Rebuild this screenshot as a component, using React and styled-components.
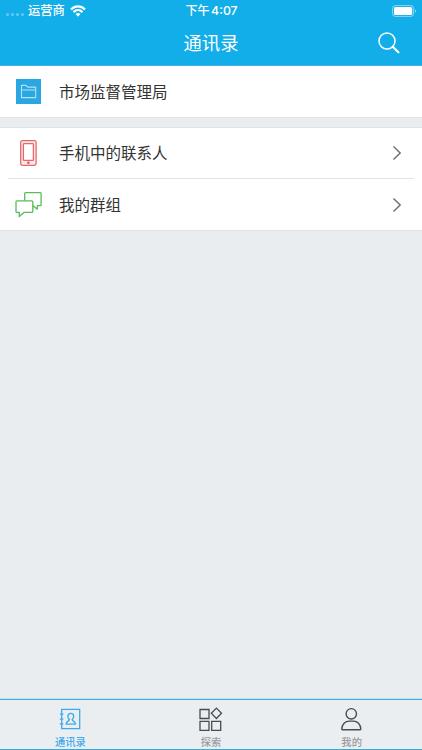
import { useState } from "react";
import styled, { createGlobalStyle } from "styled-components";

const tabs = [
  { key: "contacts", label: "通讯录", Icon: ContactsIcon },
  { key: "explore", label: "探索", Icon: ExploreIcon },
  { key: "me", label: "我的", Icon: PersonIcon },
];

export default function App() {
  const [active, setActive] = useState("contacts");

  return (
    <>
      <GlobalStyle />
      <Screen>
        <Header>
          <StatusBar>
            <Carrier>
              <SignalDots>
                <span />
                <span />
                <span />
                <span />
              </SignalDots>
              <CarrierName>运营商</CarrierName>
              <WifiIcon />
            </Carrier>
            <Clock>
              下午 <ClockTime>4:07</ClockTime>
            </Clock>
            <BatteryIcon />
          </StatusBar>
          <NavBar>
            <Title>通讯录</Title>
            <SearchButton aria-label="搜索">
              <SearchIcon />
            </SearchButton>
          </NavBar>
        </Header>

        <Content>
          <Group>
            <Row $height={51}>
              <RowIcon>
                <FolderIcon />
              </RowIcon>
              <RowLabel>市场监督管理局</RowLabel>
            </Row>
          </Group>
          <Group>
            <Row $height={50}>
              <RowIcon>
                <PhoneIcon />
              </RowIcon>
              <RowLabel>手机中的联系人</RowLabel>
              <Chevron />
            </Row>
            <Divider />
            <Row $height={51}>
              <RowIcon>
                <ChatIcon />
              </RowIcon>
              <RowLabel>我的群组</RowLabel>
              <Chevron />
            </Row>
          </Group>
        </Content>

        <TabBar>
          {tabs.map(({ key, label, Icon }) => (
            <Tab key={key} $active={active === key} onClick={() => setActive(key)}>
              <Icon />
              <TabLabel $active={active === key}>{label}</TabLabel>
            </Tab>
          ))}
        </TabBar>
      </Screen>
    </>
  );
}

// Icons
function WifiIcon() {
  return (
    <svg width="16" height="12" viewBox="0 0 16 12" fill="none" stroke="#fff" strokeWidth="2.2">
      <path d="M1 4.4C5 .3 11 .3 15 4.4" />
      <path d="M3.5 7.1c2.6-2.6 6.4-2.6 9 0" />
      <path d="M8 11.7 5.5 9.1c1.4-1.4 3.6-1.4 5 0z" fill="#fff" stroke="none" />
    </svg>
  );
}

function BatteryIcon() {
  return (
    <svg width="25" height="12" viewBox="0 0 25 12" fill="none">
      <rect x=".6" y=".6" width="21" height="10.8" rx="2.8" stroke="#fff" strokeOpacity=".5" />
      <rect x="2" y="2" width="18.2" height="8" rx="1.5" fill="#fff" />
      <path d="M23 4.2c1.4.6 1.4 3 0 3.6z" fill="#fff" fillOpacity=".55" />
    </svg>
  );
}

function SearchIcon() {
  return (
    <svg width="22" height="22" viewBox="0 0 22 22" fill="none" stroke="#fff">
      <circle cx="9" cy="9" r="8" strokeWidth="1.5" />
      <path d="m14.7 14.7 5.7 5.6" strokeWidth="2.2" strokeLinecap="round" />
    </svg>
  );
}

function FolderIcon() {
  return (
    <svg width="25" height="25" viewBox="0 0 25 25" fill="none">
      <rect width="25" height="25" fill="#29a7e1" />
      <path
        d="M5.5 18.6V6.4h4.4l1.8 1.7h8v10.5zM5.5 11h14.2"
        stroke="#b5e1f6"
        strokeWidth="1.1"
        strokeLinejoin="round"
      />
    </svg>
  );
}

function PhoneIcon() {
  return (
    <svg width="17" height="26" viewBox="0 0 17 26" fill="none" stroke="#e8676a">
      <rect x=".7" y=".7" width="15.4" height="24.6" rx="1.8" strokeWidth="1.3" fill="#fdeaea" />
      <rect x="3.4" y="3.6" width="10" height="16.8" rx=".6" strokeWidth="1.3" fill="#fff" />
      <circle cx="8.4" cy="22.8" r="1.2" fill="#e0484c" stroke="none" />
    </svg>
  );
}

function ChatIcon() {
  return (
    <svg
      width="27"
      height="26"
      viewBox="0 0 27 26"
      fill="none"
      stroke="#56bd58"
      strokeWidth="1.3"
      strokeLinejoin="round"
    >
      <path d="M9.7 8.6V1.6c0-.6.3-.9.9-.9h14.6c.6 0 .9.3.9.9v11.1c0 .6-.3.9-.9.9h-2.9v3.6l-4.5-3.8" />
      <path d="M1.9 8.8h15c.6 0 .9.3.9.9v9.7c0 .6-.3.9-.9.9H9.3l-5 4.2v-4.2H1.9c-.6 0-.9-.3-.9-.9V9.7c0-.6.3-.9.9-.9z" />
    </svg>
  );
}

function Chevron() {
  return (
    <svg width="10" height="16" viewBox="0 0 10 16" fill="none" stroke="#6c6c6c" strokeWidth="1.4">
      <path d="m1.5 1.6 6.7 6.4-6.7 6.4" />
    </svg>
  );
}

function ContactsIcon() {
  return (
    <svg width="22" height="24" viewBox="0 0 22 24" fill="none" stroke="currentColor" strokeWidth="1.3">
      <path d="M2.7 2.4h18v19.2h-18zM.8 7.2h3.6M.8 12.1h3.6M.8 16.8h3.6" />
      <path
        strokeWidth="1.4"
        d="M11.8 6.4c-3.7 0-3.5 4.6-1.4 6.2-.2 1.8-3.2 1.3-3.2 4.5h9.2c0-3.2-3-2.7-3.2-4.5 2.1-1.6 2.3-6.2-1.4-6.2z"
      />
    </svg>
  );
}

function ExploreIcon() {
  return (
    <svg width="24" height="24" viewBox="0 0 24 24" fill="none" stroke="currentColor" strokeWidth="1.3">
      <path d="M1 2.5h9v9H1zM1 14.3h9v9H1zM12.7 14.3h9v9h-9z" />
      <path d="m17.4 1.1 5.1 5.2-5.1 5.2-5.1-5.2z" />
    </svg>
  );
}

function PersonIcon() {
  return (
    <svg width="22" height="24" viewBox="0 0 22 24" fill="none" stroke="currentColor" strokeWidth="1.4">
      <circle cx="10.3" cy="6.8" r="5.2" />
      <path d="M1.4 22.7c-.4 0-.6-.2-.6-.6.2-4.9 3.4-8 7.4-8h4.2c4 0 7.2 3.1 7.4 8 0 .4-.2.6-.6.6z" />
    </svg>
  );
}

// Styled Components
const GlobalStyle = createGlobalStyle`
  * {
    box-sizing: border-box;
  }

  body {
    margin: 0;
    font-family: "Noto Sans CJK SC", sans-serif;
  }

  button {
    padding: 0;
    border: none;
    background: none;
    font: inherit;
    cursor: pointer;
  }

  svg {
    display: block;
    flex-shrink: 0;
  }
`;

const Screen = styled.div`
  height: 100vh;
  display: flex;
  flex-direction: column;
  background: #eaedf0;
  overflow: hidden;
`;

const Header = styled.header`
  height: 66px;
  background: #12aee9;
  border-bottom: 1px solid #3db5e3;
  color: #fff;
`;

const StatusBar = styled.div`
  height: 20px;
  padding: 0 5px 0 6px;
  display: grid;
  grid-template-columns: 1fr auto 1fr;
  align-items: center;

  > svg {
    justify-self: end;
  }
`;

const Carrier = styled.div`
  display: flex;
  align-items: center;
`;

const SignalDots = styled.div`
  display: flex;
  gap: 2px;
  width: 22px;
  padding-top: 7px;

  span {
    width: 3px;
    height: 3px;
    border-radius: 50%;
    background: rgba(255, 255, 255, 0.35);
  }
`;

const CarrierName = styled.span`
  margin-right: 5px;
  padding-bottom: 1px;
  font-size: 12.3px;
  font-weight: 500;
  line-height: 19px;
`;

const Clock = styled.div`
  font-size: 12px;
  font-weight: 500;
  line-height: 20px;
  white-space: nowrap;
`;

const ClockTime = styled.span`
  margin-left: -1px;
  font-family: Inter, sans-serif;
  font-size: 12.3px;
`;

const NavBar = styled.div`
  height: 45px;
  padding: 0 22px;
  display: grid;
  grid-template-columns: 1fr auto 1fr;
  align-items: center;
`;

const Title = styled.h1`
  grid-column: 2;
  margin: 0;
  padding-bottom: 2px;
  font-size: 18.3px;
  font-weight: 400;
  line-height: 24px;
`;

const SearchButton = styled.button`
  justify-self: end;
`;

const Content = styled.main`
  flex: 1;
  display: flex;
  flex-direction: column;
  gap: 9px;
`;

const Group = styled.section`
  background: #fff;
  border-bottom: 1px solid #e0e3e5;

  & + & {
    border-top: 1px solid #e0e3e5;
  }
`;

const Row = styled.div`
  height: ${(props) => props.$height}px;
  padding: 0 20px 0 14px;
  display: flex;
  align-items: center;
`;

const RowIcon = styled.div`
  width: 29px;
  margin-right: 16px;
  display: flex;
  justify-content: center;
`;

const RowLabel = styled.div`
  flex: 1;
  padding-bottom: 2px;
  color: #333;
  font-size: 15.5px;
  line-height: 22px;
`;

const Divider = styled.div`
  height: 1px;
  margin: 0 8px;
  background: #e3e3e3;
`;

const TabBar = styled.nav`
  height: 51px;
  display: grid;
  grid-template-columns: repeat(3, 1fr);
  border-top: 1px solid #45b0df;
  border-bottom: 1px solid #35aadd;
  background: #ebeef1;
  box-shadow: 0 -1px 0 #b9e4f4;
`;

const Tab = styled.button`
  display: flex;
  flex-direction: column;
  align-items: center;
  justify-content: flex-end;
  color: ${(props) => (props.$active ? "#3cabec" : "#4a4b4e")};

  svg {
    margin-bottom: 4px;
  }
`;

const TabLabel = styled.span`
  color: ${(props) => (props.$active ? "#3cabec" : "#999b9d")};
  font-size: 10.3px;
  font-weight: 500;
  line-height: 14px;
`;
